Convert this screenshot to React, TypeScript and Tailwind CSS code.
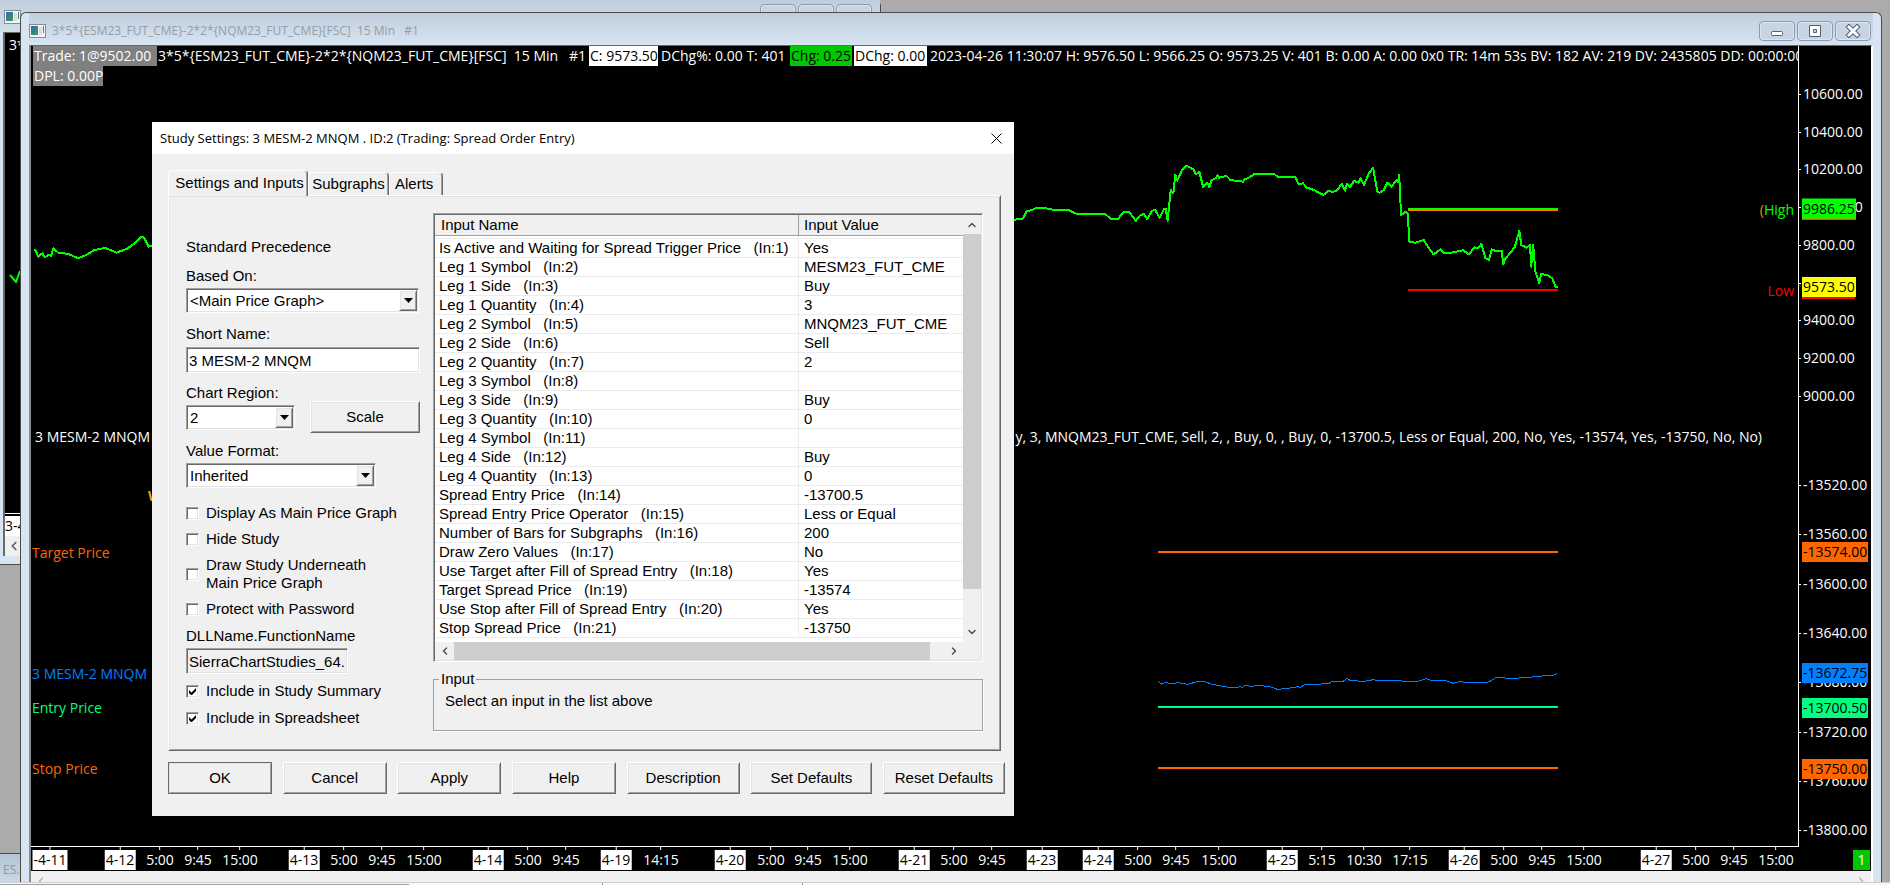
import { ReactNode } from "react";
import clsx from "clsx";
import { ChevronDown, ChevronLeft, ChevronRight, ChevronUp } from "lucide-react";

const sunken = "border border-t-[#a0a0a0] border-l-[#a0a0a0] border-r-white border-b-white shadow-[inset_1px_1px_#696969,inset_-1px_-1px_#e3e3e3]"
const raised = "bg-[#f0f0f0] border border-t-white border-l-white border-r-[#696969] border-b-[#696969] shadow-[inset_1px_1px_#e3e3e3,inset_-1px_-1px_#a0a0a0]"

const inputs = [
    ["Is Active and Waiting for Spread Trigger Price", "Yes"],
    ["Leg 1 Symbol", "MESM23_FUT_CME"],
    ["Leg 1 Side", "Buy"],
    ["Leg 1 Quantity", "3"],
    ["Leg 2 Symbol", "MNQM23_FUT_CME"],
    ["Leg 2 Side", "Sell"],
    ["Leg 2 Quantity", "2"],
    ["Leg 3 Symbol", ""],
    ["Leg 3 Side", "Buy"],
    ["Leg 3 Quantity", "0"],
    ["Leg 4 Symbol", ""],
    ["Leg 4 Side", "Buy"],
    ["Leg 4 Quantity", "0"],
    ["Spread Entry Price", "-13700.5"],
    ["Spread Entry Price Operator", "Less or Equal"],
    ["Number of Bars for Subgraphs", "200"],
    ["Draw Zero Values", "No"],
    ["Use Target after Fill of Spread Entry", "Yes"],
    ["Target Spread Price", "-13574"],
    ["Use Stop after Fill of Spread Entry", "Yes"],
    ["Stop Spread Price", "-13750"],
]

// price -> y inside the chart, one scale for each region
const topY = (price: number) => Math.round(48 + (10600 - price) * 0.1885)
const bottomY = (price: number) => Math.round(439 + (-13520 - price) * 1.233)

const topPrices = [10600, 10400, 10200, 10000, 9800, 9600, 9400, 9200, 9000]
const bottomPrices = [-13520, -13560, -13600, -13640, -13680, -13720, -13760, -13800]

const priceTags = [
    { text: "9986.25", y: 163, color: "bg-[#00ff00] border-b border-[#ff8000]" },
    { text: "9573.50", y: 241, color: "bg-[#ffff00]" },
    { text: "-13574.00", y: bottomY(-13574), color: "bg-[#ff6600]" },
    { text: "-13672.75", y: bottomY(-13672.75), color: "bg-[#0080ff]" },
    { text: "-13700.50", y: bottomY(-13700.5), color: "bg-[#00ff80]" },
    { text: "-13750.00", y: bottomY(-13750), color: "bg-[#ff6600]" },
]

const lineNames = [
    { text: "Target Price", y: 507, color: "text-[#ff6600]" },
    { text: "3 MESM-2 MNQM", y: 628, color: "text-[#0080ff]" },
    { text: "Entry Price", y: 662, color: "text-[#00ff80]" },
    { text: "Stop Price", y: 723, color: "text-[#ff6600]" },
]

const times: [number, string][] = [
    [19, "-4-11"], [89, "4-12"], [129, "5:00"], [167, "9:45"], [209, "15:00"],
    [273, "4-13"], [313, "5:00"], [351, "9:45"], [393, "15:00"],
    [457, "4-14"], [497, "5:00"], [535, "9:45"],
    [585, "4-19"], [630, "14:15"],
    [699, "4-20"], [740, "5:00"], [777, "9:45"], [819, "15:00"],
    [883, "4-21"], [923, "5:00"], [961, "9:45"],
    [1011, "4-23"],
    [1067, "4-24"], [1107, "5:00"], [1145, "9:45"], [1188, "15:00"],
    [1251, "4-25"], [1291, "5:15"], [1333, "10:30"], [1379, "17:15"],
    [1433, "4-26"], [1473, "5:00"], [1511, "9:45"], [1553, "15:00"],
    [1625, "4-27"], [1665, "5:00"], [1703, "9:45"], [1745, "15:00"],
]

const WindowIcon = () => (
    <svg width="17" height="14" viewBox="0 0 17 14" className="shrink-0" aria-hidden="true">
        <defs>
            <linearGradient id="pane" x1="0" y1="0" x2="1" y2="1">
                <stop offset="0" stopColor="#2f6db5" />
                <stop offset="1" stopColor="#3f9a5c" />
            </linearGradient>
        </defs>
        <rect x="0.5" y="0.5" width="16" height="13" fill="#f4f4f4" stroke="#8a8a8a" />
        <rect x="2" y="2" width="7" height="9" fill="url(#pane)" />
        <rect x="10" y="3" width="3" height="8" fill="#dcdcdc" />
        <rect x="14" y="2" width="1" height="7" fill="url(#pane)" />
    </svg>
)

const CaptionButton = ({ label, children }: { label: string, children: ReactNode }) => (
    <button type="button" aria-label={label} className="flex h-5 w-9 items-center justify-center rounded-sm border border-[#8a9ab2] bg-[#c6d4e3] shadow-[inset_0_0_0_1px_#dbe6f1]">
        <svg width="16" height="14" viewBox="0 0 16 14" aria-hidden="true">{children}</svg>
    </button>
)

const DropDown = ({ id, label, value, className }: { id: string, label: string, value: string, className: string }) => (
    <div className="flex flex-col">
        <label htmlFor={id}>{label}</label>
        <div className={clsx("relative mt-[3px] h-[25px] bg-white p-px", sunken, className)}>
            <select id={id} defaultValue={value} className="h-full w-full appearance-none bg-transparent pl-[2px] outline-none">
                <option>{value}</option>
            </select>
            <span className={clsx("pointer-events-none absolute top-px right-px bottom-px flex w-[18px] items-center justify-center", raised)}>
                <svg width="9" height="5" viewBox="0 0 9 5" aria-hidden="true"><path d="M0 0H9L4.500 5Z" fill="#000" /></svg>
            </span>
        </div>
    </div>
)

const CheckBox = ({ id, checked, children }: { id: string, checked?: boolean, children: ReactNode }) => (
    <div className="flex items-center gap-[7px]">
        <span className="relative block size-[13px]">
            <input id={id} type="checkbox" defaultChecked={checked} className={clsx("peer block size-[13px] appearance-none bg-white", sunken)} />
            <svg width="7" height="7" viewBox="0 0 7 7" className="pointer-events-none absolute top-[3px] left-[3px] hidden peer-checked:block" aria-hidden="true">
                <path d="M0 2V5L2 7H3L7 3V0L2.500 4.500Z" fill="#000" />
            </svg>
        </span>
        <label htmlFor={id}>{children}</label>
    </div>
)

const ChartLines = () => (
    <svg className="absolute inset-0 h-full w-full" aria-hidden="true" fill="none" shapeRendering="crispEdges">
        <g transform="translate(-31 -46)" strokeWidth="2">
            <g stroke="#00ff00" strokeLinejoin="round">
                <path
                    vectorEffect="non-scaling-stroke"
                    transform="scale(.4018 .3333)"
                    d="M87 747L95 770L105 760L112 772L120 765L127 768L133 745L145 758L170 762L195 775L215 765L235 750L262 744L290 758L315 747L330 735L350 712L357 710L370 740L377 737L390 730"
                />
                <path
                    vectorEffect="non-scaling-stroke"
                    transform="translate(1000 140) scale(.3827 .3333)"
                    d="M30 240L60 236L70 213L82 211L95 204L115 203L130 208L150 210L180 211L203 223L240 222L275 222L290 237L308 237L322 217L337 215L345 227L355 243L365 227L376 222L385 237L397 213L405 209L417 233L428 208L433 206L438 243L446 150L453 160L458 104L463 122L475 92L487 77L505 88L512 102L521 96L531 142L542 128L547 141L553 120L565 114L568 105L572 113L592 108L602 120L635 125L640 118L652 112L665 102L717 102L725 110L772 112L780 132L792 130L800 142L820 150L845 165L858 153L870 156L882 150L893 132L902 152L906 131L914 142L925 123L937 128L942 114L951 135L963 102L975 84L986 155L992 158L1003 150L1012 128L1023 140L1036 120L1040 126L1043 104L1048 226L1060 215L1066 220L1069 305L1085 308L1107 300L1118 320L1133 343L1152 328L1158 338L1180 338L1210 331L1225 343L1240 322L1250 325L1258 311L1268 354L1278 360L1285 328L1295 333L1311 332L1315 373L1320 357L1345 322L1357 272L1362 315L1376 323L1385 315L1388 380L1393 314L1399 395L1409 430L1414 402L1430 405L1443 415L1452 441L1457 441"
                />
            </g>
            <path d="M1408 210H1558" stroke="#ff8000" />
            <path d="M1408 209H1558" stroke="#00ff00" />
            <path d="M1408 290H1558" stroke="#ff0000" />
            <path d="M1158 552H1558M1158 768H1558" stroke="#ff6600" />
            <path d="M1158 707H1558" stroke="#00ff80" />
            <path
                stroke="#0080ff"
                strokeWidth="1"
                vectorEffect="non-scaling-stroke"
                transform="translate(1140 520) scale(.4783 .3333)"
                d="M38 484L45 492L55 487L65 492L80 488L100 493L120 485L135 484L150 493L185 502L205 504L209 498L213 504L218 497L235 499L245 496L272 500L287 508L305 506L330 500L335 503L345 493L375 495L380 490L395 490L400 486L425 484L433 475L440 482L470 484L488 479L495 482L520 481L560 484L585 483L597 476L610 482L640 482L655 490L668 485L690 488L730 486L745 472L780 476L800 473L830 470L855 465L865 466L872 460"
            />
        </g>
    </svg>
)

const BackWindows = () => (
    <>
        <div className="absolute top-0 left-0 flex h-[565px] w-[881px] flex-col rounded-tr-md border-r border-b border-[#4a4a4a] bg-[#d7e4f2]">
            <div className="flex h-8 items-end justify-between bg-linear-to-b from-[#c0cedc] to-[#d0deeb] pb-2 pl-1">
                <WindowIcon />
                <div className="mr-2 flex gap-[2px] self-end">
                    <CaptionButton label="Minimize"><path d="M4 10H12" /></CaptionButton>
                    <CaptionButton label="Restore"><path d="M4 10H12" /></CaptionButton>
                    <CaptionButton label="Close"><path d="M4 10H12" /></CaptionButton>
                </div>
            </div>
            <div className="ml-[3px] flex w-40 flex-1 flex-col border-t border-l-2 border-[#696969] bg-black pt-[2px] text-white">
                <span className="pl-1">3*</span>
                <svg width="20" height="20" className="mt-52 ml-1" aria-hidden="true" fill="none"><path d="M1 16L7 23L11 12" stroke="#00ff00" strokeWidth="2" className="-translate-y-1" /></svg>
                <div className="mt-auto border-t border-white bg-black pt-[2px]">
                    <span className="block w-10 bg-white text-black">3-4</span>
                </div>
                <div className="flex h-5 items-center bg-[#f0f0f0] pl-[2px] text-[#606060]"><ChevronLeft size={14} strokeWidth={3} /></div>
            </div>
            <div className="h-2" />
        </div>
        <div className="absolute bottom-0 left-0 h-8 w-40 border-t border-[#4a4a4a] bg-linear-to-b from-[#b5c4d4] to-[#cbdae8] pt-[6px] pl-[3px] text-[12px] text-[#8d99a5]">ES.</div>
    </>
)

const ChartHeader = () => (
    <div className="absolute top-0 left-[2px] whitespace-pre">
        <div className="flex">
            <span className="mr-px w-[124px] bg-[#808080] px-px text-white">Trade: 1@9502.00</span>
            <span className="w-[431px] text-white">{"3*5*{ESM23_FUT_CME}-2*2*{NQM23_FUT_CME}[FSC]  15 Min   #1"}</span>
            <span className="w-[69px] bg-white px-px text-black">C: 9573.50</span>
            <span className="w-[132px] pl-[3px] text-white">DChg%: 0.00 T: 401</span>
            <span className="mr-[2px] w-[62px] bg-[#00c800] px-px text-black">Chg: 0.25</span>
            <span className="w-[73px] bg-white px-px text-black">DChg: 0.00</span>
            <span className="pl-[3px] text-white">2023-04-26 11:30:07 H: 9576.50 L: 9566.25 O: 9573.25 V: 401 B: 0.00 A: 0.00 0x0 TR: 14m 53s BV: 182 AV: 219 DV: 2435805 DD: 00:00:00</span>
        </div>
        <span className="inline-block w-[70px] bg-[#808080] px-px text-white">DPL: 0.00P</span>
    </div>
)

const PriceAxis = () => (
    <div className="relative w-[73px] shrink-0 text-white">
        <div className="absolute inset-y-0 left-0 w-px bg-white" />
        {topPrices.map(p => (
            <div key={p} className="absolute left-0 flex -translate-y-1/2 items-center" style={{ top: topY(p) }}>
                <span className="mr-[2px] h-px w-[3px] bg-white" />{p.toFixed(2)}
            </div>
        ))}
        {bottomPrices.map(p => (
            <div key={p} className="absolute left-0 flex -translate-y-1/2 items-center" style={{ top: bottomY(p) }}>
                <span className="mr-[2px] h-px w-[3px] bg-white" />{p.toFixed(2)}
            </div>
        ))}
        <div className="absolute top-[251px] left-1 h-[2px] w-[53px] bg-[#ff0000]" />
        {priceTags.map(t => (
            <span key={t.text} className={clsx("absolute left-1 -translate-y-1/2 px-px text-black", t.color)} style={{ top: t.y }}>{t.text}</span>
        ))}
    </div>
)

const MainWindow = () => (
    <div className="absolute top-3 right-2 bottom-[3px] left-5 flex flex-col rounded-t-md border border-b-0 border-[#4a4a4a] bg-[#d7e4f2] px-2">
        <div className="flex h-8 items-center bg-linear-to-b from-[#c0cedc] to-[#d7e4f2] pt-1">
            <WindowIcon />
            <h1 className="pl-[6px] text-[12px] whitespace-pre text-[#949ea8]">{"3*5*{ESM23_FUT_CME}-2*2*{NQM23_FUT_CME}[FSC]  15 Min   #1"}</h1>
            <div className="mr-[2px] ml-auto flex gap-[2px]">
                <CaptionButton label="Minimize"><rect x="2.500" y="7.500" width="11" height="4" rx="1" fill="#fff" stroke="#555f70" /></CaptionButton>
                <CaptionButton label="Maximize"><path d="M2.500 1.500H13.500V12.500H2.500ZM6.500 5.500V8.500H9.500V5.500Z" fill="#fff" fillRule="evenodd" stroke="#555f70" /></CaptionButton>
                <CaptionButton label="Close">
                    <path d="M4 3L12 11M12 3L4 11" stroke="#555f70" strokeWidth="5" strokeLinecap="square" />
                    <path d="M4 3L12 11M12 3L4 11" stroke="#fff" strokeWidth="3" strokeLinecap="square" />
                </CaptionButton>
            </div>
        </div>
        <div className="flex min-h-0 flex-1 flex-col border-t border-r-2 border-l-2 border-t-[#696969] border-r-white border-l-[#8a8a8a] bg-black">
            <div className="flex min-h-0 flex-1">
                <div className="relative min-w-0 flex-1 overflow-hidden border-b border-white">
                    <ChartLines />
                    <ChartHeader />
                    <div className="absolute top-[381px] right-9 left-1 flex justify-between whitespace-pre text-white">
                        <span>3 MESM-2 MNQM</span>
                        <span>y, 3, MNQM23_FUT_CME, Sell, 2, , Buy, 0, , Buy, 0, -13700.5, Less or Equal, 200, No, Yes, -13574, Yes, -13750, No, No)</span>
                    </div>
                    <span className="absolute top-[440px] left-[117px] font-bold text-[#ffa000]">W</span>
                    {lineNames.map(l => (
                        <span key={l.text} className={clsx("absolute left-px -translate-y-1/2", l.color)} style={{ top: l.y }}>{l.text}</span>
                    ))}
                    <span className="absolute top-[154px] right-1 text-[#00ff00]"><span className="text-[#ff8000]">(</span>High</span>
                    <span className="absolute top-[235px] right-1 text-[#ff0000]">Low</span>
                </div>
                <PriceAxis />
            </div>
            <div className="relative h-6 overflow-hidden text-white">
                {times.map(([x, t]) => (
                    <div key={x} className="absolute top-0 flex -translate-x-1/2 flex-col items-center" style={{ left: x }}>
                        <span className="h-[3px] w-px bg-white" />
                        <span className={clsx("px-px whitespace-nowrap", t.includes("-") && "bg-white text-black")}>{t}</span>
                    </div>
                ))}
                <span className="absolute top-[3px] right-px w-[17px] bg-[#00c800] text-center">1</span>
            </div>
            <div className="flex h-[11px] items-center justify-between overflow-hidden bg-[#f0f0f0] px-1 pt-2 text-[#b8b8b8]">
                <ChevronLeft size={12} strokeWidth={3} />
                <ChevronRight size={12} strokeWidth={3} />
            </div>
        </div>
    </div>
)

const InputsTable = () => (
    <div className={clsx("flex flex-col bg-white p-px", sunken)}>
        <div className="flex">
            <div className="h-[427px] flex-1 overflow-hidden">
                <table className="w-full table-fixed border-separate border-spacing-0 text-left">
                    <thead>
                        <tr>
                            <th className="h-[21px] w-[364px] border-r border-b border-[#a0a0a0] bg-[#f0f0f0] pl-[6px] font-normal">Input Name</th>
                            <th className="h-[21px] border-b border-[#a0a0a0] bg-[#f0f0f0] pl-[5px] font-normal">Input Value</th>
                        </tr>
                    </thead>
                    <tbody>
                        <tr className="leading-none">
                            <td className="h-[3px] border-r border-b border-[#ececec]"></td>
                            <td className="h-[3px] border-b border-[#ececec]"></td>
                        </tr>
                        {inputs.map(([name, value], i) => (
                            <tr key={name}>
                                <td className="h-[19px] border-r border-b border-[#ececec] pl-1 whitespace-pre">{`${name}   (In:${i + 1})`}</td>
                                <td className="h-[19px] border-b border-[#ececec] pl-[5px] whitespace-nowrap">{value}</td>
                            </tr>
                        ))}
                    </tbody>
                </table>
            </div>
            <div className="flex w-[18px] flex-col items-center bg-[#f0f0f0] text-[#505050]">
                <div className="flex h-[19px] items-center"><ChevronUp size={12} strokeWidth={3} /></div>
                <div className="h-[355px] w-full bg-[#cdcdcd]" />
                <div className="mt-auto flex h-5 items-center"><ChevronDown size={12} strokeWidth={3} /></div>
            </div>
        </div>
        <div className="flex h-[18px] items-center bg-[#f0f0f0] text-[#505050]">
            <div className="flex w-[19px] justify-center"><ChevronLeft size={12} strokeWidth={3} /></div>
            <div className="h-full w-[476px] bg-[#cdcdcd]" />
            <ChevronRight size={12} strokeWidth={3} className="ml-[18px]" />
        </div>
    </div>
)

const StudySettings = () => (
    <div role="dialog" aria-labelledby="dialog-title" className="absolute top-[122px] left-[152px] flex w-[862px] flex-col bg-[#f0f0f0] pb-[22px] font-['Liberation_Sans',sans-serif] text-[15px] leading-[18px] text-black">
        <div className="flex h-8 items-center justify-between bg-white pr-3 pl-2">
            <h2 id="dialog-title" className="font-['Open_Sans',sans-serif] text-[13px]">Study Settings: 3 MESM-2 MNQM . ID:2 (Trading: Spread Order Entry)</h2>
            <button type="button" aria-label="Close">
                <svg width="11" height="11" viewBox="0 0 11 11" aria-hidden="true"><path d="M0.500 0.500L10.500 10.500M10.500 0.500L0.500 10.500" stroke="#000" /></svg>
            </button>
        </div>

        <div role="tablist" className="mt-4 ml-4 flex items-end">
            <button type="button" role="tab" aria-selected="true" className="relative z-10 -mb-px h-[26px] w-[140px] rounded-t-sm border border-b-0 border-t-white border-r-[#696969] border-l-white bg-[#f0f0f0] pb-[2px] pl-[3px] shadow-[inset_-1px_0_#a0a0a0]">Settings and Inputs</button>
            <button type="button" role="tab" className="h-[23px] w-[81px] rounded-t-sm border border-b-0 border-t-white border-r-[#696969] border-l-white shadow-[inset_-1px_0_#a0a0a0]">Subgraphs</button>
            <button type="button" role="tab" className="h-[23px] w-[54px] rounded-t-sm border border-b-0 border-t-white border-r-[#696969] border-l-white pl-[5px] text-left shadow-[inset_-1px_0_#a0a0a0]">Alerts</button>
        </div>

        <div className={clsx("mr-[13px] ml-4 flex justify-between pr-[17px] pb-[19px] pl-[17px]", raised)}>
            <form className="flex w-[234px] flex-col pt-[42px]">
                <p className="mb-[11px]">Standard Precedence</p>
                <DropDown id="based-on" label="Based On:" value="<Main Price Graph>" className="w-[233px]" />
                <label htmlFor="short-name" className="mt-3 mb-1">Short Name:</label>
                <input id="short-name" defaultValue="3 MESM-2 MNQM" className={clsx("h-[26px] bg-white px-[2px] outline-none", sunken)} />
                <div className="mt-[11px] mb-3 flex items-end justify-between">
                    <DropDown id="region" label="Chart Region:" value="2" className="w-[109px]" />
                    <button type="button" className={clsx("-mb-[3px] h-8 w-[110px]", raised)}>Scale</button>
                </div>
                <DropDown id="format" label="Value Format:" value="Inherited" className="w-[190px]" />
                <div className="mt-4 flex flex-col gap-2">
                    <CheckBox id="display-main">Display As Main Price Graph</CheckBox>
                    <CheckBox id="hide">Hide Study</CheckBox>
                    <CheckBox id="underneath">Draw Study Underneath<br />Main Price Graph</CheckBox>
                    <CheckBox id="protect">Protect with Password</CheckBox>
                </div>
                <label htmlFor="dll" className="mt-[9px] mb-[3px]">DLLName.FunctionName</label>
                <input id="dll" readOnly defaultValue="SierraChartStudies_64." className={clsx("mb-2 h-[26px] w-[162px] bg-[#f0f0f0] pl-[2px] outline-none", sunken)} />
                <div className="flex flex-col gap-[9px]">
                    <CheckBox id="summary" checked>Include in Study Summary</CheckBox>
                    <CheckBox id="spreadsheet" checked>Include in Spreadsheet</CheckBox>
                </div>
            </form>
            <div className="flex w-[550px] flex-col pt-[17px]">
                <InputsTable />
                <fieldset className="mt-2 h-[61px] border border-[#a0a0a0] px-[11px] shadow-[1px_1px_#fff]">
                    <legend className="-ml-[6px] px-[2px]">Input</legend>
                    <p className="pt-1">Select an input in the list above</p>
                </fieldset>
            </div>
        </div>

        <div className="mt-[11px] mr-[9px] ml-4 flex justify-between">
            <button type="button" className={clsx("h-8 w-[104px] outline outline-[#696969] -outline-offset-1", raised)}>OK</button>
            <button type="button" className={clsx("h-8 w-[104px]", raised)}>Cancel</button>
            <button type="button" className={clsx("h-8 w-[104px]", raised)}>Apply</button>
            <button type="button" className={clsx("h-8 w-[104px]", raised)}>Help</button>
            <button type="button" className={clsx("h-8 w-[113px]", raised)}>Description</button>
            <button type="button" className={clsx("h-8 w-[122px]", raised)}>Set Defaults</button>
            <button type="button" className={clsx("h-8 w-[122px]", raised)}>Reset Defaults</button>
        </div>
    </div>
)

const App = () => {
    return (
        <main className="relative h-screen w-full overflow-hidden bg-[#ababab] font-['Open_Sans',sans-serif] text-[14px] leading-5">
            <BackWindows />
            <MainWindow />
            <StudySettings />
            <div className="absolute inset-x-0 bottom-0 flex h-[3px] border-t border-[#d0d0d0] bg-[#f7f7f7]">
                <span className="w-[409px] border-b border-[#a0a0a0]" />
                <span className="w-[194px] border-r border-[#a0a0a0]" />
                <span className="w-[200px] border-r border-[#a0a0a0]" />
            </div>
        </main>
    );
}

export default App;
